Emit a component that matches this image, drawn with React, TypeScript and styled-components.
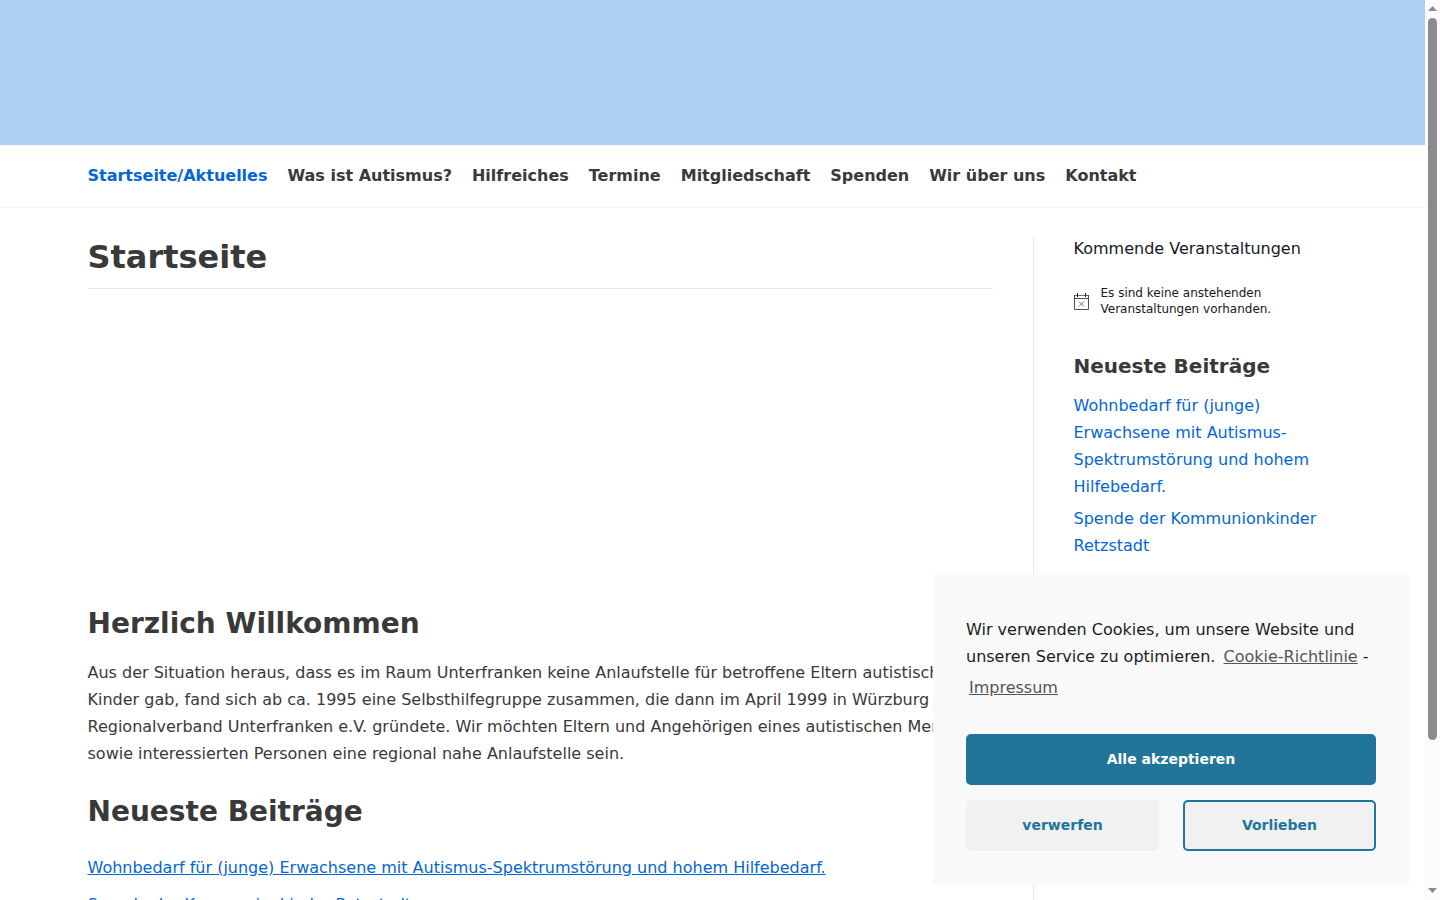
import React from "react";
import styled, { createGlobalStyle } from "styled-components";

const GlobalStyle = createGlobalStyle`
  *, *::before, *::after { box-sizing: border-box; }
  html, body, #root { margin: 0; height: 100%; }
  body {
    overflow: hidden;
    background: #fff;
    color: #393939;
    font-family: "DejaVu Sans", Verdana, sans-serif;
    font-size: 16px;
    line-height: 27px;
  }
  h1, h2, h3, p, ul { margin: 0; padding: 0; }
  ul { list-style: none; }
`;

const Viewport = styled.div`
  display: flex;
  height: 100%;
  overflow: hidden;
`;

const Page = styled.div`
  flex: 1;
  min-width: 0;
`;

const Container = styled.div`
  max-width: 1280px;
  margin: 0 auto;
  padding: 0 15px;
`;

const Banner = styled.div`
  height: 145px;
  background: #aecef2;
`;

const NavBar = styled.nav`
  border-bottom: 1px solid #f6f6f6;
  padding: 17px 0 18px;
`;

const NavList = styled.ul`
  display: flex;
  flex-wrap: wrap;
  column-gap: 20px;
`;

const NavLink = styled.a<{ $active?: boolean }>`
  color: ${(p) => (p.$active ? "#0366d6" : "#393939")};
  font-weight: 700;
  text-decoration: none;
`;

const Columns = styled(Container)`
  display: flex;
  gap: 40px;
  padding-top: 29px;
`;

const Main = styled.main`
  flex: 1;
  min-width: 0;
`;

const PageTitle = styled.h1`
  padding: 1px 0 12px;
  border-bottom: 1px solid #e9eaec;
  font-size: 32px;
  line-height: 38px;
`;

const Slider = styled.div`
  height: 317px;
`;

const SectionTitle = styled.h2`
  font-size: 28px;
  line-height: 36px;
`;

const Intro = styled.p`
  padding: 17px 0 27px;
`;

const PostList = styled.ul`
  display: grid;
  gap: 10px;
  padding-top: 24px;
`;

const PostLink = styled.a`
  color: #0366d6;
`;

const Sidebar = styled.aside`
  width: 305px;
  min-height: 1200px;
  padding-left: 40px;
  border-left: 1px solid #e9eaec;
`;

const EventsTitle = styled.h2`
  color: #141827;
  font-size: 16px;
  font-weight: 400;
  line-height: 24px;
`;

const Notice = styled.div`
  display: flex;
  align-items: center;
  gap: 12px;
  padding: 24px 0 36px;
  color: #141827;
  font-size: 12px;
  line-height: 16px;
`;

const NoticeIcon = styled.svg`
  flex: none;
`;

const WidgetTitle = styled.h3`
  padding-bottom: 13px;
  font-size: 20px;
  line-height: 26px;
`;

const WidgetList = styled.ul`
  display: grid;
  gap: 5px;

  a { text-decoration: none; }
`;

const CookieBox = styled.section`
  position: fixed;
  right: 31px;
  bottom: 16px;
  width: 476px;
  padding: 41px 33px 33px;
  background: #f9f9f9;
  color: #191e23;
`;

const CookieLink = styled.a`
  display: inline-block;
  padding: 0 0 4px;
  margin-left: 3px;
  color: #555;
`;

const ButtonGrid = styled.div`
  display: grid;
  grid-template-columns: 1fr 1fr;
  gap: 15px 24px;
  padding-top: 29px;
`;

const CookieButton = styled.button<{ $kind: "accept" | "deny" | "outline" }>`
  grid-column: ${(p) => (p.$kind === "accept" ? "1 / -1" : "auto")};
  height: 51px;
  padding: 0 8px 2px;
  border: 2px solid ${(p) => (p.$kind === "deny" ? "#f1f1f1" : "#21759b")};
  border-radius: 5px;
  background: ${(p) => (p.$kind === "accept" ? "#21759b" : "#f1f1f1")};
  color: ${(p) => (p.$kind === "accept" ? "#fff" : "#21759b")};
  font-family: inherit;
  font-size: 14px;
  font-weight: 700;
  cursor: pointer;
`;

const ScrollTrack = styled.div`
  display: flex;
  flex-direction: column;
  align-items: center;
  width: 15px;
  padding: 6px 0 7px;
  background: #fcfcfc;
`;

const ScrollThumb = styled.div`
  flex: 722;
  width: 9px;
  margin-top: 6px;
  border-radius: 5px;
  background: #8b8b8b;
`;

const ScrollRest = styled.div`
  flex: 147;
`;

const Arrow = ({ down }: { down?: boolean }) => (
  <svg width="9" height="6" viewBox="0 0 9 6" aria-hidden="true">
    <path d={down ? "M0 1h9L4.5 6z" : "M0 5h9L4.5 0z"} fill="#8b8b8b" />
  </svg>
);

const CalendarIcon = () => (
  <NoticeIcon width="15" height="17" viewBox="0 0 15 17" fill="none" aria-hidden="true">
    <path d="M.5 2v14.5h14V2M.5 5.5h14" stroke="#141827" strokeOpacity=".75" />
    <path d="M3.5 0v4M11.5 0v4" stroke="#141827" />
    <path d="M.5 2.5h14" stroke="#141827" strokeOpacity=".6" />
    <path d="M5 8.5l5 5M10 8.5l-5 5" stroke="#5d6f9b" />
  </NoticeIcon>
);

const navItems = [
  "Startseite/Aktuelles",
  "Was ist Autismus?",
  "Hilfreiches",
  "Termine",
  "Mitgliedschaft",
  "Spenden",
  "Wir über uns",
  "Kontakt",
];

const posts = [
  "Wohnbedarf für (junge) Erwachsene mit Autismus-Spektrumstörung und hohem Hilfebedarf.",
  "Spende der Kommunionkinder Retzstadt",
];

const Posts = () => (
  <>
    {posts.map((post) => (
      <li key={post}>
        <PostLink href="#">{post}</PostLink>
      </li>
    ))}
  </>
);

export default function App() {
  return (
    <Viewport>
      <GlobalStyle />
      <Page>
        <header>
          <Banner />
          <NavBar>
            <Container>
              <NavList>
                {navItems.map((item, i) => (
                  <li key={item}>
                    <NavLink href="#" $active={i === 0}>{item}</NavLink>
                  </li>
                ))}
              </NavList>
            </Container>
          </NavBar>
        </header>
        <Columns>
          <Main>
            <PageTitle>Startseite</PageTitle>
            <Slider />
            <SectionTitle>Herzlich Willkommen</SectionTitle>
            <Intro>
              Aus der Situation heraus, dass es im Raum Unterfranken keine Anlaufstelle für betroffene
              Eltern autistischer Kinder gab, fand sich ab ca. 1995 eine Selbsthilfegruppe zusammen, die
              dann im April 1999 in Würzburg den Regionalverband Unterfranken e.V. gründete. Wir möchten
              Eltern und Angehörigen eines autistischen Menschen sowie interessierten Personen eine
              regional nahe Anlaufstelle sein.
            </Intro>
            <SectionTitle>Neueste Beiträge</SectionTitle>
            <PostList>
              <Posts />
            </PostList>
          </Main>
          <Sidebar>
            <EventsTitle>Kommende Veranstaltungen</EventsTitle>
            <Notice>
              <CalendarIcon />
              <p>Es sind keine anstehenden Veranstaltungen vorhanden.</p>
            </Notice>
            <WidgetTitle>Neueste Beiträge</WidgetTitle>
            <WidgetList>
              <Posts />
            </WidgetList>
          </Sidebar>
        </Columns>
      </Page>
      <ScrollTrack>
        <Arrow />
        <ScrollThumb />
        <ScrollRest />
        <Arrow down />
      </ScrollTrack>
      <CookieBox aria-label="Cookies">
        <p>
          Wir verwenden Cookies, um unsere Website und unseren Service zu optimieren.{" "}
          <CookieLink href="#">Cookie-Richtlinie</CookieLink> -{" "}
          <CookieLink href="#">Impressum</CookieLink>
        </p>
        <ButtonGrid>
          <CookieButton type="button" $kind="accept">Alle akzeptieren</CookieButton>
          <CookieButton type="button" $kind="deny">verwerfen</CookieButton>
          <CookieButton type="button" $kind="outline">Vorlieben</CookieButton>
        </ButtonGrid>
      </CookieBox>
    </Viewport>
  );
}
